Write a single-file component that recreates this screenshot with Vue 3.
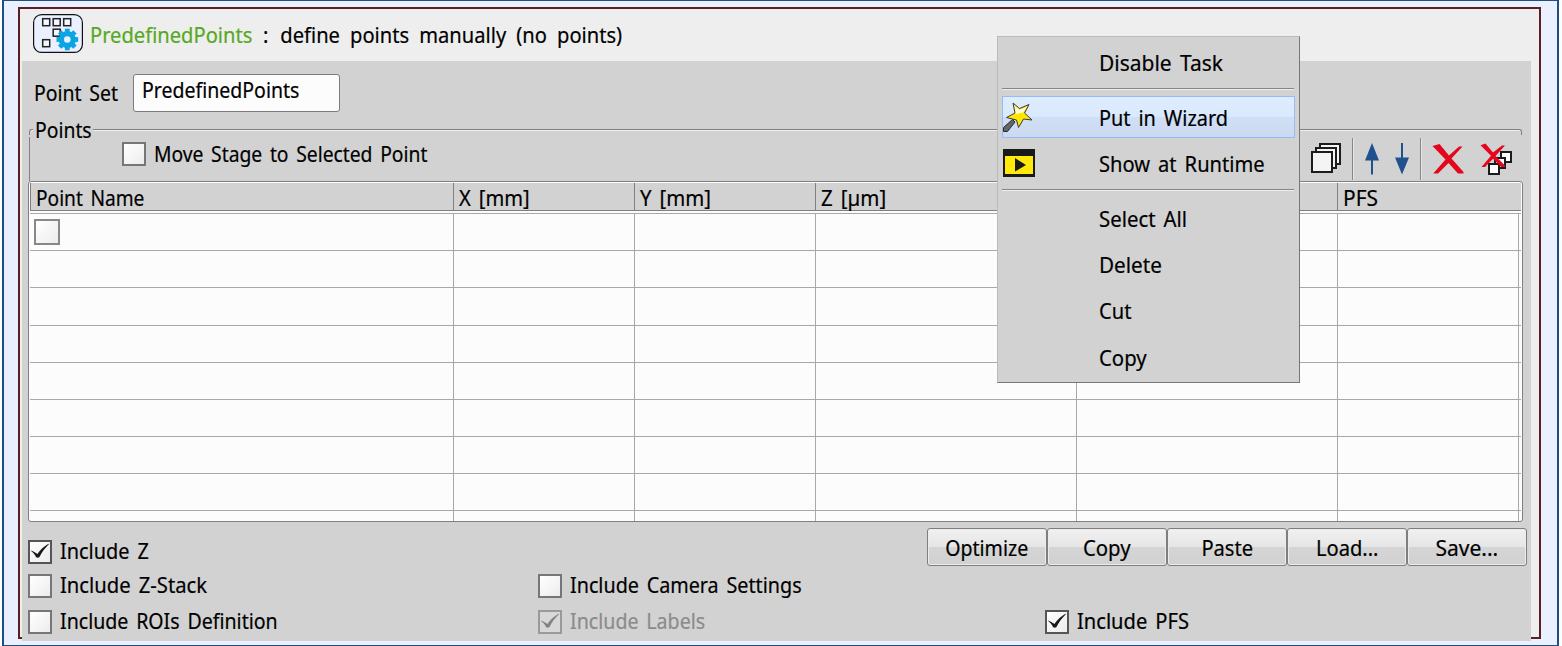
<script setup>
const columns = ['Point Name', 'X [mm]', 'Y [mm]', 'Z [µm]', '', '', 'PFS']
const rows = 9
const buttons = ['Optimize', 'Copy', 'Paste', 'Load...', 'Save...']

// Horizontal condensing factor for each label
const widths = {
  field: 0.887,
  'Point Set': 0.885,
  Points: 0.88,
  'Move Stage to Selected Point': 0.877,
  'Point Name': 0.87,
  'Y [mm]': 0.925,
  'Z [µm]': 0.93,
  'Include Z': 0.905,
  'Include Z-Stack': 0.92,
  'Include ROIs Definition': 0.89,
  'Include Camera Settings': 0.897,
  'Include Labels': 0.892,
  'Disable Task': 0.953,
  'Put in Wizard': 0.905,
  'Select All': 0.925,
  Delete: 0.94,
  Copy: 0.925,
  Optimize: 0.89,
  'Save...': 0.955,
  PFS: 0.95,
}
const fit = (s) => ({ transform: `scaleX(${widths[s] ?? 0.915})` })
const tick = 'M0.500 8.500C3 9 5.500 10.500 7.500 12 10 8 14.500 3.500 19.500 1.500 15 6 11.500 10.500 9.500 15Q7.500 16.500 6 15C5 12.500 3 10.500 .500 8.500Z'
</script>

<template>
  <div class="page">
    <div class="outer">
      <div class="frame">
        <header class="head">
          <svg class="logo" width="50" height="39" viewBox="0 0 50 39">
            <rect x=".6" y=".6" width="48.8" height="37.8" rx="8" fill="#eaf0ff" stroke="#111" stroke-width="1.2" />
            <g fill="#f4f7ff" stroke="#222" stroke-width="1.5">
              <rect x="9.7" y="4.7" width="7" height="7" />
              <rect x="20.2" y="4.7" width="7" height="7" />
              <rect x="30.7" y="4.7" width="7" height="7" />
              <rect x="20.2" y="15.2" width="7" height="7" />
              <rect x="9.7" y="25.7" width="7" height="7" />
            </g>
            <g transform="translate(34.3 25.5)" fill="#0aa5e2">
              <circle r="8.6" />
              <rect v-for="a in 8" :key="a" x="-2.4" y="-10.8" width="4.8" height="5" :transform="`rotate(${a * 45})`" />
              <circle r="3.3" fill="#eaf0ff" />
            </g>
          </svg>
          <span class="t name" :style="fit('PredefinedPoints')">PredefinedPoints</span>
          <span class="t desc" :style="fit('desc')"><span class="colon">:</span> define points manually (no points)</span>
        </header>

        <main class="panel">
          <div class="setrow">
            <span class="lab"><span class="t" :style="fit('Point Set')">Point Set</span></span>
            <div class="field"><span class="t" :style="fit('field')">PredefinedPoints</span></div>
          </div>

          <section class="group">
            <div class="legend">
              <i class="l0"></i><span class="lg"><span class="t" :style="fit('Points')">Points</span></span><i class="l1"></i>
            </div>
            <div class="tools">
              <span class="check"></span>
              <span class="t mv" :style="fit('Move Stage to Selected Point')">Move Stage to Selected Point</span>
              <span class="grow"></span>
              <svg class="ic1" width="30" height="31" viewBox="0 0 30 31" fill="#f4f4f4" stroke="#1c1c1c" stroke-width="2">
                <rect x="9" y="1" width="20" height="20" />
                <rect x="5" y="5" width="20" height="20" />
                <rect x="1" y="9" width="20" height="20" />
              </svg>
              <i class="vsep s1"></i>
              <svg class="ic2" width="16" height="32" viewBox="0 0 16 32" fill="#21508f">
                <path d="M8 0 15 17.5H9V31.5H7V17.5H1Z" />
              </svg>
              <svg class="ic3" width="16" height="32" viewBox="0 0 16 32" fill="#21508f">
                <path d="M8 31.5 15 14.5H9V0H7V14.5H1Z" />
              </svg>
              <i class="vsep s2"></i>
              <svg class="ic4" width="32" height="32" viewBox="0 0 32 32" fill="#e3061c">
                <path d="M.5 3 7.500 1 17 12.500 27 3.500H30.500L19.500 15.500 31.500 29V30.500H26L16.500 20 6 30.500H1.200L13.500 16.500Z" />
              </svg>
              <svg class="ic5" width="33" height="33" viewBox="0 0 33 33">
                <g fill="#fff" stroke="#1c1c1c" stroke-width="2">
                  <rect x="21" y="9" width="10" height="10" />
                  <rect x="15" y="15" width="10" height="10" />
                  <rect x="9" y="21" width="10" height="10" />
                </g>
                <path fill="#e3061c" d="M.500 2.200 5.500 .500 13 9.500 22 2.500H25L15.500 13 25 22.500V24H21L13 15.800 5 24H1.500L11 12.800Z" />
              </svg>
            </div>
          </section>

          <section class="table">
            <div class="thead">
              <div v-for="(c, i) in columns" :key="i" class="th"><span class="t" :style="fit(c)">{{ c }}</span></div>
            </div>
            <div class="tbody">
              <div v-for="r in rows" :key="r" class="tr">
                <div v-for="(c, i) in columns" :key="i" class="td">
                  <span v-if="r === 1 && i === 0" class="check big"></span>
                </div>
              </div>
            </div>
          </section>

          <section class="foot">
            <div class="col c1">
              <label class="opt o1"><span class="check on"><svg width="20" height="20" viewBox="0 0 20 20"><path :d="tick" /></svg></span><span class="t" :style="fit('Include Z')">Include Z</span></label>
              <label class="opt o2"><span class="check"></span><span class="t" :style="fit('Include Z-Stack')">Include Z-Stack</span></label>
              <label class="opt o3"><span class="check"></span><span class="t" :style="fit('Include ROIs Definition')">Include ROIs Definition</span></label>
            </div>
            <div class="col c2">
              <label class="opt o2"><span class="check"></span><span class="t" :style="fit('Include Camera Settings')">Include Camera Settings</span></label>
              <label class="opt o3 off"><span class="check on"><svg width="20" height="20" viewBox="0 0 20 20"><path :d="tick" /></svg></span><span class="t" :style="fit('Include Labels')">Include Labels</span></label>
            </div>
            <div class="right">
              <div class="btns">
                <button v-for="b in buttons" :key="b" type="button"><span class="t" :style="fit(b)">{{ b }}</span></button>
              </div>
              <label class="opt o3 pfs"><span class="check on"><svg width="20" height="20" viewBox="0 0 20 20"><path :d="tick" /></svg></span><span class="t" :style="fit('Include PFS')">Include PFS</span></label>
            </div>
          </section>
        </main>
      </div>
    </div>

    <div class="menu">
      <div class="mi m1"><span class="t" :style="fit('Disable Task')">Disable Task</span></div>
      <hr />
      <div class="mi hot">
        <svg width="30" height="31" viewBox="0 0 30 31">
          <path d="M.5 25.500 9.500 17.500 12 20 4.500 29.500H.5Z" fill="#666" stroke="#2a2a2a" />
          <path d="M10 1 16.500 6.500 26 2.500 21.500 11 29 18 20.500 17 15.500 25.500 13.500 18 3.500 15.500 12 11Z" fill="#ffe600" stroke="#3a3a3a" />
          <path d="M11.500 3.500 16.500 8 24 4.500 20 10.500 13 12Z" fill="#fffbe0" />
        </svg>
        <span class="t" :style="fit('Put in Wizard')">Put in Wizard</span>
      </div>
      <div class="mi m3">
        <svg width="32" height="28" viewBox="0 0 32 28">
          <path d="M0 0H32V28H0Z" fill="#1a1a18" /><path d="M2 7H30V25H2Z" fill="#ffe80a" /><path d="M12 9 23 16 12 22.500Z" fill="#1a1a18" />
        </svg>
        <span class="t" :style="fit('Show at Runtime')">Show at Runtime</span>
      </div>
      <hr class="h2" />
      <div class="mi"><span class="t" :style="fit('Select All')">Select All</span></div>
      <div class="mi"><span class="t" :style="fit('Delete')">Delete</span></div>
      <div class="mi"><span class="t" :style="fit('Cut')">Cut</span></div>
      <div class="mi last"><span class="t" :style="fit('Copy')">Copy</span></div>
    </div>
  </div>
</template>

<style>
body { margin: 0; background: #fff; }
</style>

<style scoped>
* { box-sizing: border-box; }
.page { position: relative; width: 1562px; height: 646px; overflow: hidden; padding: 0 3px 0 2px; font: 22px/28px "Noto Sans", "Open Sans", sans-serif; word-spacing: 3px; color: #000; }
.t { display: inline-block; white-space: pre; transform-origin: 0 50%; -webkit-text-stroke: 0.2px currentColor; }
.outer { height: 646px; border: 2px solid #1f4f82; border-width: 1px 2px 1px 2px; background: #eaf0ff; padding: 6px 16px 0 14px; }
.frame { height: 632px; border: 2px solid #591f22; background: #eee; }
.head { height: 52px; display: flex; padding: 5px 0 0 13px; }
.logo { flex: none; }
.head .t { margin-top: 6px; }
.name { margin-left: 7px; color: #56a91f; width: 173px; }
.desc { word-spacing: 5.3px; }
.colon { margin-right: 2px; }
.panel { margin: 0 8px 0 2px; height: 580px; background: #d2d2d2; }
.setrow { display: flex; padding: 13px 0 0 12px; height: 64px; }
.lab { margin-top: 4px; width: 99px; }
.field { width: 207px; height: 38px; border: 1px solid #7c7c7c; border-radius: 3px; background: #fcfcfc; padding: 0 0 0 8px; }
.group { height: 56px; margin: 0 9px 0 7px; }
.legend { display: flex; height: 12px; align-items: flex-start; }
.legend i { border-top: 1px solid #808080; box-shadow: inset 0 1px #efefef; margin-top: 4px; height: 6px; }
.l0 { width: 4px; border-left: 1px solid #808080; border-top-left-radius: 3px; }
.lg { margin: -10px 0 0 2px; width: 58px; }
.l1 { flex: 1; border-right: 1px solid #808080; border-top-right-radius: 3px; }
.tools { display: flex; height: 44px; border-left: 1px solid #808080; }
.check { display: block; flex: none; width: 24px; height: 24px; border: 2px solid #767676; background: linear-gradient(135deg, #fff, #ececec); }
.check.big { width: 26px; height: 26px; border-color: #888; margin: 5px 0 0 4px; }
.check.on { border-color: #555; }
.check svg { display: block; fill: #1a1a1a; }
.tools .check { margin: 5px 8px 0 92px; }
.mv { margin-top: 2px; }
.grow { flex: 1; }
.tools svg { flex: none; }
.vsep { width: 2px; height: 42px; background: linear-gradient(90deg, #858585 50%, #e6e6e6 50%); margin-top: 1px; }
.ic1 { margin-top: 6px; }
.s1 { margin-left: 11px; margin-right: 10px; }
.ic2 { margin: 6px 14px 0 0; }
.ic3 { margin: 6px 10px 0 0; }
.s2 { margin-right: 10px; }
.ic4 { margin: 6px 16px 0 0; }
.ic5 { margin: 6px 9px 0 0; }
.table { margin: 0 8px 0 6px; height: 341px; border: 1px solid #808080; border-radius: 3px; background: #fcfcfc; padding: 1px 1px 0 1px; overflow: hidden; }
.thead, .tr { display: grid; grid-template-columns: 424px 181px 181px 261px 0 261px 181px; }
.thead { grid-template-columns: 423px 181px 181px 261px 0 261px 1fr; height: 28px; background: #d2d2d2; border-bottom: 1px solid #808080; border-left: 1px solid #808080; }
.th { border-right: 1px solid #808080; padding-left: 5px; line-height: 29px; height: 27px; }
.th:last-child { border-right: 0; }
.th:nth-child(5), .td:nth-child(5) { border: 0; padding: 0; }
.tbody { border-top: 1px solid #a8a8a8; margin-top: 2px; }
.tr { height: 37px; border-bottom: 1px solid #a8a8a8; }
.tr:nth-child(3) { height: 38px; }
.td { border-right: 1px solid #a8a8a8; }
.foot { display: flex; height: 119px; margin-left: 6px; }
.opt { display: flex; }
.opt .t { margin: -4px 0 0 8px; }
.col { display: flex; flex-direction: column; padding-top: 18px; }
.c1 { width: 510px; }
.c1 .o1 { height: 34px; }
.o2 { height: 36px; }
.c2 { padding-top: 52px; width: 389px; }
.off { color: #8b8b8b; }
.off .check { border-color: #9a9a9a; background: #d8d8d8; }
.off .check svg { fill: #838383; }
.right { padding-top: 6px; }
.btns { display: flex; height: 38px; }
button { width: 120px; height: 38px; border: 1px solid #7f7f7f; border-radius: 3px; background: linear-gradient(#f1f1f1, #e6e6e6 49%, #d5d5d5 51%, #d1d1d1); box-shadow: inset 0 0 0 1px #ececec; padding: 0 0 1px; font: inherit; color: inherit; text-align: center; }
button .t { transform-origin: 50% 50%; }
.pfs { margin: 44px 0 0 118px; }
.menu { position: absolute; left: 997px; top: 36px; width: 303px; height: 347px; background: #d2d2d2; border: 1px solid #bbb; border-right-color: #777; border-bottom-color: #777; padding: 0 4px; }
.mi { display: flex; height: 46px; align-items: center; padding-left: 97px; }
.mi svg { flex: none; margin-left: -96px; }
.m1 { height: 51px; padding-bottom: 2px; }
hr { margin: 0 1px 6px 0; height: 2px; border: 0; background: linear-gradient(#858585 50%, #eee 50%); }
.h2 { margin-bottom: 4px; }
.mi.hot { height: 42px; border: 1px solid #94bdf7; background: linear-gradient(#deecff 0, #dae9fd 49%, #cfdff5 51%, #ccdaf1); padding-left: 96px; }
.hot .t { margin-left: 66px; }
.m3 { height: 51px; padding-bottom: 2px; }
.m3 .t { margin-left: 64px; }
.last { padding-top: 1px; }
</style>
